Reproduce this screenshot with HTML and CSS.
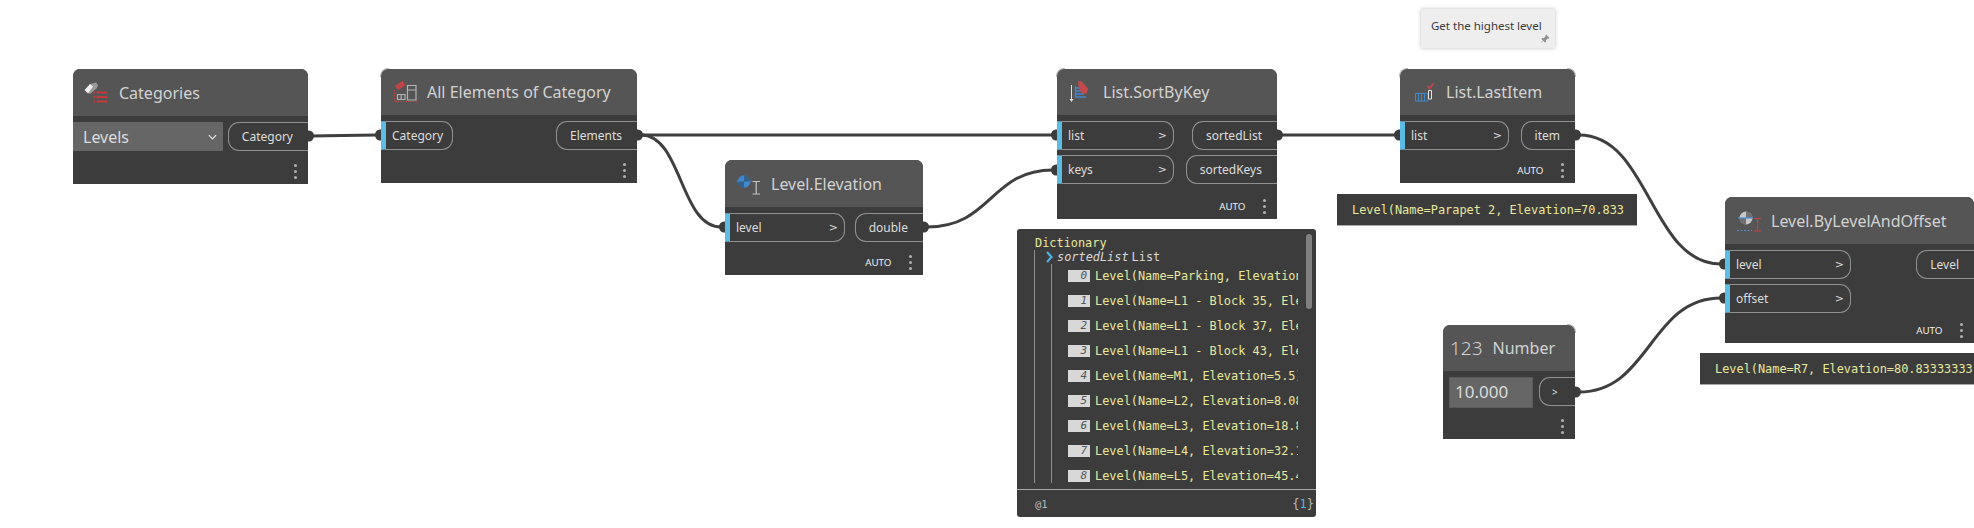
FILE: index.html
```html
<!DOCTYPE html>
<html lang="en">
  <head>
    <meta charset="UTF-8" />
    <title>Dynamo graph - highest level</title>
    <link rel="stylesheet" href="styles.css">
  </head>
  <body>
    <div id="canvas">
      <!-- Wires sit under the nodes -->
      <svg class="wires" viewBox="0 0 1974 528" xmlns="http://www.w3.org/2000/svg">
        <defs>
          <path id="plugOut" d="M0 -5.5h1a5 5.500 0 0 1 0 11h-1z"/>
          <path id="plugIn" d="M0 -5.5h-1a5 5.500 0 0 0 0 11h1z"/>
        </defs>
        <path class="wire" d="M312 136C340 136 345 135 377 135"/>
        <path class="wire" d="M641 135H1053"/>
        <path class="wire" d="M641 135C682 135 680 227 721 227"/>
        <path class="wire" d="M927 227C992 227 990 170 1053 170"/>
        <path class="wire" d="M1281 135H1396"/>
        <path class="wire" d="M1579 135C1650 135 1650 264 1721 264"/>
        <path class="wire" d="M1579 392C1650 392 1650 298 1721 298"/>
        <use href="#plugOut" x="308" y="136"/>
        <use href="#plugOut" x="637" y="135"/>
        <use href="#plugOut" x="923" y="227"/>
        <use href="#plugOut" x="1277" y="135"/>
        <use href="#plugOut" x="1575" y="135"/>
        <use href="#plugOut" x="1575" y="392"/>
        <use href="#plugIn" x="381" y="135"/>
        <use href="#plugIn" x="725" y="227"/>
        <use href="#plugIn" x="1057" y="135"/>
        <use href="#plugIn" x="1057" y="170"/>
        <use href="#plugIn" x="1400" y="135"/>
        <use href="#plugIn" x="1725" y="264"/>
        <use href="#plugIn" x="1725" y="298"/>
      </svg>

      <!-- Categories -->
      <div class="node n-categories">
        <div class="node-head">
          <svg class="node-icon" viewBox="0 0 30 24" xmlns="http://www.w3.org/2000/svg">
            <path fill="#9a9a9a" d="M7 3L13 1.500L15 4L14 7L7 13L5 12Z"/>
            <path fill="#eeeeee" d="M1.500 9L7 3L10 5.500L5 12.500Z"/>
            <path stroke="#c23b3b" stroke-width="2" d="M13.500 11.500H24.500M13.500 16H24.500M13.500 20.500H24.500"/>
            <path stroke="#c23b3b" stroke-width="2" d="M10.500 11.500H12.300M10.500 16H12.300M10.500 20.500H12.300"/>
          </svg>
          <span class="node-title">Categories</span>
        </div>
        <div class="node-ports">
          <div class="dropdown">
            <span>Levels</span>
            <svg class="chevron" viewBox="0 0 10 6" xmlns="http://www.w3.org/2000/svg">
              <path d="M1 1L5 5L9 1" fill="none" stroke="#e8e8e8" stroke-width="1.300"/>
            </svg>
          </div>
          <div class="port-out">Category</div>
        </div>
        <div class="node-foot"><i class="dots"></i></div>
      </div>

      <!-- All Elements of Category -->
      <div class="node n-elements corner-left">
        <div class="node-head">
          <svg class="node-icon" viewBox="0 0 30 24" xmlns="http://www.w3.org/2000/svg">
            <path stroke="#bf4444" stroke-width="5.500" d="M5.500 8L13 3"/>
            <path stroke="#bf4444" stroke-dasharray="1.500 1" fill="none" d="M3.500 10V21.500H26"/>
            <path fill="none" stroke="#b4b4b4" stroke-width="1.200" d="M16.500 5.500H25V20H16.500ZM16.500 10H25M6.500 14.500H14V19.500H6.500ZM10.200 14.500V19.500"/>
          </svg>
          <span class="node-title">All Elements of Category</span>
        </div>
        <div class="node-ports">
          <div class="port-col"><div class="port-in">Category</div></div>
          <div class="port-col"><div class="port-out">Elements</div></div>
        </div>
        <div class="node-foot"><i class="dots"></i></div>
      </div>

      <!-- Level.Elevation -->
      <div class="node n-elevation">
        <div class="node-head">
          <svg class="node-icon" viewBox="0 0 30 24" xmlns="http://www.w3.org/2000/svg">
            <path fill="#3f88cc" d="M1.500 9.500L5 6.500H13L16.500 9.500L13 12.500H5Z"/>
            <circle cx="9" cy="9.500" r="6.200" fill="#3f88cc"/>
            <path fill="#2d3f50" d="M9 9.500V3.300A6.200 6.200 0 0 1 15.200 9.500ZM9 9.500V15.700A6.200 6.200 0 0 1 2.800 9.500Z" opacity="0.550"/>
            <path fill="none" stroke="#c4c4c4" stroke-width="1.200" d="M17.500 9.500H25M21.200 9.500V22M17.500 22H25"/>
          </svg>
          <span class="node-title">Level.Elevation</span>
        </div>
        <div class="node-ports">
          <div class="port-col"><div class="port-in">level<b>&gt;</b></div></div>
          <div class="port-col"><div class="port-out">double</div></div>
        </div>
        <div class="node-foot"><span class="auto">AUTO</span><i class="dots"></i></div>
      </div>

      <!-- List.SortByKey -->
      <div class="node n-sort corner-left">
        <div class="node-head">
          <svg class="node-icon" viewBox="0 0 30 24" xmlns="http://www.w3.org/2000/svg">
            <path fill="none" stroke="#e0e0e0" d="M4.500 5V20"/>
            <path fill="#e0e0e0" d="M2.500 19H6.500L4.500 22Z"/>
            <path fill="none" stroke="#3f88cc" stroke-width="1.300" d="M8.500 6V17H19M8.500 14H17M8.500 11H14.500M8.500 8H12"/>
            <path fill="#c44a4a" d="M11 1.500L14 1L21 8.500L20 13L16 14L12 10Z"/>
          </svg>
          <span class="node-title">List.SortByKey</span>
        </div>
        <div class="node-ports">
          <div class="port-col">
            <div class="port-in">list<b>&gt;</b></div>
            <div class="port-in">keys<b>&gt;</b></div>
          </div>
          <div class="port-col">
            <div class="port-out">sortedList</div>
            <div class="port-out">sortedKeys</div>
          </div>
        </div>
        <div class="node-foot"><span class="auto">AUTO</span><i class="dots"></i></div>
      </div>

      <!-- Preview of SortByKey -->
      <div class="watch-dict">
        <div class="dict-title">Dictionary</div>
        <div class="tree">
          <div class="tree-key">
            <svg class="tree-arrow" viewBox="0 0 7 12" xmlns="http://www.w3.org/2000/svg">
              <path d="M1 1L5.500 6L1 11" fill="none" stroke="#4fb0e0" stroke-width="2.200"/>
            </svg>
            <em>sortedList</em><span>List</span>
          </div>
          <div class="tree-sub">
            <div class="row"><span class="idx">0</span><span class="val">Level(Name=Parking, Elevation=-10.0)</span></div>
            <div class="row"><span class="idx">1</span><span class="val">Level(Name=L1 - Block 35, Elevation=0.0)</span></div>
            <div class="row"><span class="idx">2</span><span class="val">Level(Name=L1 - Block 37, Elevation=0.0)</span></div>
            <div class="row"><span class="idx">3</span><span class="val">Level(Name=L1 - Block 43, Elevation=0.0)</span></div>
            <div class="row"><span class="idx">4</span><span class="val">Level(Name=M1, Elevation=5.5)</span></div>
            <div class="row"><span class="idx">5</span><span class="val">Level(Name=L2, Elevation=8.083)</span></div>
            <div class="row"><span class="idx">6</span><span class="val">Level(Name=L3, Elevation=18.833)</span></div>
            <div class="row"><span class="idx">7</span><span class="val">Level(Name=L4, Elevation=32.167)</span></div>
            <div class="row"><span class="idx">8</span><span class="val">Level(Name=L5, Elevation=45.417)</span></div>
          </div>
        </div>
        <div class="dict-foot"><span>@1</span><span class="count">{<b>1</b>}</span></div>
        <div class="scroll-thumb"></div>
      </div>

      <!-- Note -->
      <div class="note">
        Get the highest level
        <svg class="pin" viewBox="0 0 10 10" xmlns="http://www.w3.org/2000/svg">
          <path fill="#8e8e8e" d="M6 0.500L9.500 4L8.500 4.800L7.800 4.400L5.800 6.200L6 8L5 8.500L3.300 6.700L1 9L0.800 8.800L3 6.400L1.500 5L2 4L3.800 4.200L5.600 2.200L5.200 1.500Z"/>
        </svg>
      </div>

      <!-- List.LastItem -->
      <div class="node n-last corner-left corner-right">
        <div class="node-head">
          <svg class="node-icon" viewBox="0 0 30 24" xmlns="http://www.w3.org/2000/svg">
            <path fill="none" stroke="#3f88cc" d="M5.500 13.500H18V21H5.500ZM8.500 13.500V21M11.500 13.500V21M14.500 13.500V21"/>
            <path fill="none" stroke="#e4e4e4" d="M18.500 10.500H21.500V19H18.500Z"/>
            <path fill="none" stroke="#b84a50" stroke-width="1.800" d="M17.500 6L19.500 8.500L24 3"/>
          </svg>
          <span class="node-title">List.LastItem</span>
        </div>
        <div class="node-ports">
          <div class="port-col"><div class="port-in">list<b>&gt;</b></div></div>
          <div class="port-col"><div class="port-out">item</div></div>
        </div>
        <div class="node-foot"><span class="auto">AUTO</span><i class="dots"></i></div>
      </div>

      <div class="watch w-parapet">Level(Name=Parapet 2, Elevation=70.833</div>

      <!-- Number -->
      <div class="node n-number corner-right">
        <div class="node-head head-number">
          <span class="num-glyph">123</span>
          <span class="node-title">Number</span>
        </div>
        <div class="node-ports">
          <div class="num-input">10.000</div>
          <div class="port-out port-arrow">&gt;</div>
        </div>
        <div class="node-foot"><i class="dots"></i></div>
      </div>

      <!-- Level.ByLevelAndOffset -->
      <div class="node n-offset">
        <div class="node-head">
          <svg class="node-icon" viewBox="0 0 30 24" xmlns="http://www.w3.org/2000/svg">
            <circle cx="11" cy="9" r="6.500" fill="#c8c8c8"/>
            <path fill="#4a4a4a" d="M11 9V2.500A6.500 6.500 0 0 1 17.500 9ZM11 9V15.500A6.500 6.500 0 0 1 4.500 9Z" opacity="0.700"/>
            <path stroke="#4a90d0" stroke-width="1.200" d="M3 9H18"/>
            <path fill="none" stroke="#c04040" stroke-width="1.200" d="M19 9.500H26M22.500 9.500V22M19 22H26"/>
            <path stroke="#4a90d0" stroke-width="1.200" stroke-dasharray="2 1.500" d="M2 21.500H17"/>
          </svg>
          <span class="node-title">Level.ByLevelAndOffset</span>
        </div>
        <div class="node-ports">
          <div class="port-col">
            <div class="port-in">level<b>&gt;</b></div>
            <div class="port-in">offset<b>&gt;</b></div>
          </div>
          <div class="port-col"><div class="port-out">Level</div></div>
        </div>
        <div class="node-foot"><span class="auto">AUTO</span><i class="dots"></i></div>
      </div>

      <div class="watch w-offset">Level(Name=R7, Elevation=80.83333333</div>
    </div>
  </body>
</html>
```

FILE: styles.css
```css
html, body {
  margin: 0;
  background-color: #ffffff;
}
#canvas {
  position: relative;
  width: 1974px;
  height: 528px;
  overflow: hidden;
  font-family: "Noto Sans", Arial, sans-serif;
}
.wires {
  position: absolute;
  left: 0;
  top: 0;
  width: 1974px;
  height: 528px;
  fill: #3c3c3c;
}
.wire {
  fill: none;
  stroke: #3f3f3f;
  stroke-width: 3;
}

/* Nodes */
.node {
  position: absolute;
  display: flex;
  flex-direction: column;
  box-sizing: border-box;
  background-color: #3c3c3c;
  border-radius: 7px 7px 0 0;
  color: #dcdcdc;
}
.n-categories { left: 73px; top: 69px; width: 235px; height: 115px; }
.n-elements { left: 381px; top: 69px; width: 256px; height: 114px; }
.n-elevation { left: 725px; top: 160px; width: 198px; height: 115px; }
.n-sort { left: 1057px; top: 69px; width: 220px; height: 150px; }
.n-last { left: 1400px; top: 69px; width: 175px; height: 114px; }
.n-number { left: 1443px; top: 325px; width: 132px; height: 114px; }
.n-offset { left: 1725px; top: 197px; width: 249px; height: 146px; }

/* thin light arc left on some node corners */
.corner-left::before, .corner-right::after {
  content: "";
  position: absolute;
  top: -1px;
  width: 8px;
  height: 8px;
  border-top: 1px solid #b8b8b8;
}
.corner-left::before {
  left: -1px;
  border-left: 1px solid #b8b8b8;
  border-radius: 8px 0 0 0;
}
.corner-right::after {
  right: -1px;
  border-right: 1px solid #b8b8b8;
  border-radius: 0 8px 0 0;
}

.node-head {
  display: flex;
  align-items: center;
  flex: none;
  height: 46px;
  padding-left: 10px;
  background-color: #555555;
  border-radius: 7px 7px 0 0;
}
.n-categories .node-head, .n-elevation .node-head, .n-offset .node-head { height: 47px; }
.node-icon {
  flex: none;
  width: 30px;
  height: 24px;
  margin-right: 6px;
  overflow: visible;
}
.node-title {
  font-size: 16px;
  color: #d2d2d2;
  white-space: nowrap;
}
.head-number { padding-left: 7px; }
.num-glyph {
  font-size: 19px;
  font-weight: 300;
  color: #d2d2d2;
  margin-right: 10px;
}

.node-ports {
  display: flex;
  justify-content: space-between;
  padding-top: 6px;
}
.n-number .node-ports { padding-left: 6px; }
.port-col {
  display: flex;
  flex-direction: column;
  align-items: flex-end;
  gap: 5px;
}
.port-col:first-child { align-items: flex-start; }
.port-in, .port-out {
  display: flex;
  align-items: center;
  box-sizing: border-box;
  height: 29px;
  font-size: 12px;
  white-space: nowrap;
  border: 1px solid #909090;
}
.port-in {
  justify-content: space-between;
  padding: 0 6px 1px 6px;
  border-left: 5px solid #5bbce4;
  border-radius: 0 11px 11px 0;
}
.port-in b {
  font-family: "DejaVu Sans", sans-serif;
  font-weight: normal;
  font-size: 11px;
}
.port-out {
  padding: 0 15px 0 13px;
  border-right: none;
  border-radius: 11px 0 0 11px;
}
.n-elements .port-in { width: 72px; }
.n-elevation .port-in { width: 120px; }
.n-sort .port-in { width: 117px; }
.n-last .port-in { width: 109px; }
.n-offset .port-in { width: 126px; }

.dropdown {
  display: flex;
  align-items: center;
  justify-content: space-between;
  box-sizing: border-box;
  width: 150px;
  height: 29px;
  padding: 0 6px 0 10px;
  background-color: #666666;
  font-size: 16px;
}
.chevron { width: 9px; height: 6px; }
.num-input {
  box-sizing: border-box;
  width: 84px;
  height: 31px;
  padding-left: 5px;
  background-color: #666666;
  border: 1px solid #5a5a5a;
  font-size: 17px;
  line-height: 28px;
}
.port-arrow {
  width: 36px;
  padding: 0 0 0 12px;
  font-size: 10px;
}

.node-foot {
  display: flex;
  align-items: center;
  justify-content: flex-end;
  gap: 17px;
  height: 26px;
  margin-top: auto;
  padding-right: 11.500px;
}
.auto {
  font-size: 9.800px;
  color: #eeeeee;
}
.dots {
  display: block;
  width: 3px;
  height: 3px;
  border-radius: 50%;
  background-color: #b0b0b0;
  box-shadow: 0 -6px 0 #b0b0b0, 0 6px 0 #b0b0b0;
}

/* Preview bubbles */
.watch {
  position: absolute;
  box-sizing: border-box;
  display: flex;
  align-items: center;
  height: 32px;
  padding-top: 1px;
  background-color: #3c3c3c;
  border-bottom: 1px solid #a8a8a8;
  color: #e8e89c;
  font-family: "DejaVu Sans Mono", monospace;
  font-size: 11.900px;
  white-space: nowrap;
}
.w-parapet { left: 1337px; top: 194px; width: 300px; padding-left: 15px; }
.w-offset { left: 1700px; top: 353px; width: 274px; padding-left: 15px; overflow: hidden; }

.watch-dict {
  position: absolute;
  left: 1017px;
  top: 229px;
  box-sizing: border-box;
  display: flex;
  flex-direction: column;
  width: 299px;
  height: 288px;
  background-color: #3c3c3c;
  border-radius: 3px;
  font-family: "DejaVu Sans Mono", monospace;
  font-size: 11.900px;
  color: #e8e89c;
}
.dict-title {
  height: 21px;
  padding: 7px 0 0 18px;
  box-sizing: border-box;
}
.tree {
  flex: none;
  height: 233px;
  margin-left: 17px;
  border-left: 1px solid #8e8e8e;
}
.tree-key {
  display: flex;
  align-items: center;
  gap: 3px;
  height: 14px;
  padding-left: 11px;
  color: #d8d8d8;
}
.tree-key em { margin-left: 1px; }
.tree-arrow { width: 7px; height: 12px; }
.tree-sub {
  height: 219px;
  margin-left: 16px;
  overflow: hidden;
  border-left: 1px solid #8e8e8e;
}
.row {
  display: flex;
  align-items: center;
  gap: 5px;
  height: 24.900px;
  padding-left: 16px;
}
.idx {
  flex: none;
  width: 22px;
  height: 12px;
  padding-right: 3px;
  box-sizing: border-box;
  background-color: #d8d8d8;
  color: #555555;
  font-size: 11px;
  font-style: italic;
  line-height: 12px;
  text-align: right;
}
.val {
  width: 203px;
  overflow: hidden;
  white-space: nowrap;
}
.dict-foot {
  display: flex;
  align-items: center;
  justify-content: space-between;
  flex: none;
  height: 28px;
  margin-top: 6px;
  padding: 0 2px 0 18px;
  border-top: 1px solid #a8a8a8;
  color: #b8b8b8;
  font-size: 10.500px;
}
.count { font-size: 12px; }
.count b { color: #5bb4de; font-weight: normal; }
.scroll-thumb {
  position: absolute;
  right: 4px;
  top: 5px;
  width: 6px;
  height: 75px;
  border-radius: 3px;
  background-color: #808080;
}

/* Note */
.note {
  position: absolute;
  left: 1421px;
  top: 9px;
  box-sizing: border-box;
  width: 134px;
  height: 39px;
  padding: 9px 0 0 10px;
  background-color: #eeeeee;
  box-shadow: 0 0 4px rgba(0, 0, 0, 0.25);
  color: #3a3a3a;
  font-family: "Noto Sans", Arial, sans-serif;
  font-size: 11.500px;
  white-space: nowrap;
}
.pin {
  position: absolute;
  right: 5px;
  bottom: 4px;
  width: 10px;
  height: 10px;
}
```
